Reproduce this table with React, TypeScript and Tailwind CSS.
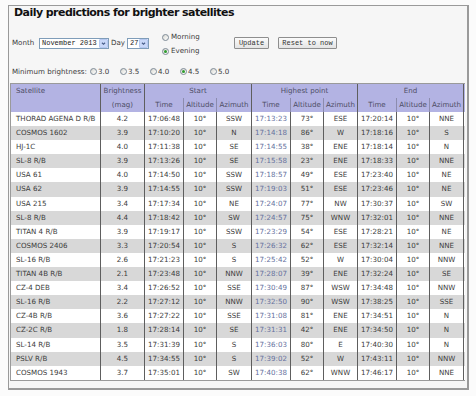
const rows: string[][] = [
  ["THORAD AGENA D R/B", "4.2", "17:06:48", "10°", "SSW", "17:13:23", "73°", "ESE", "17:20:14", "10°", "NNE"],
  ["COSMOS 1602", "3.9", "17:10:20", "10°", "N", "17:14:18", "86°", "W", "17:18:16", "10°", "S"],
  ["HJ-1C", "4.0", "17:11:38", "10°", "SE", "17:14:55", "38°", "ENE", "17:18:14", "10°", "N"],
  ["SL-8 R/B", "3.9", "17:13:26", "10°", "SE", "17:15:58", "23°", "ENE", "17:18:33", "10°", "NNE"],
  ["USA 61", "4.0", "17:14:50", "10°", "SSW", "17:18:57", "49°", "ESE", "17:23:40", "10°", "NE"],
  ["USA 62", "3.9", "17:14:55", "10°", "SSW", "17:19:03", "51°", "ESE", "17:23:46", "10°", "NE"],
  ["USA 215", "3.4", "17:17:34", "10°", "NE", "17:24:07", "77°", "NW", "17:30:37", "10°", "SW"],
  ["SL-8 R/B", "4.4", "17:18:42", "10°", "SW", "17:24:57", "75°", "WNW", "17:32:01", "10°", "NNE"],
  ["TITAN 4 R/B", "3.9", "17:19:17", "10°", "SSW", "17:23:29", "54°", "ESE", "17:28:21", "10°", "NE"],
  ["COSMOS 2406", "3.3", "17:20:54", "10°", "S", "17:26:32", "62°", "ESE", "17:32:14", "10°", "NNE"],
  ["SL-16 R/B", "2.6", "17:21:23", "10°", "S", "17:25:42", "52°", "W", "17:30:04", "10°", "NNW"],
  ["TITAN 4B R/B", "2.1", "17:23:48", "10°", "NNW", "17:28:07", "39°", "ENE", "17:32:24", "10°", "SE"],
  ["CZ-4 DEB", "3.4", "17:26:52", "10°", "SSE", "17:30:49", "87°", "WSW", "17:34:48", "10°", "NNW"],
  ["SL-16 R/B", "2.2", "17:27:12", "10°", "NNW", "17:32:50", "90°", "WSW", "17:38:25", "10°", "SSE"],
  ["CZ-4B R/B", "3.6", "17:27:22", "10°", "SSE", "17:31:08", "81°", "ENE", "17:34:51", "10°", "N"],
  ["CZ-2C R/B", "1.8", "17:28:14", "10°", "SE", "17:31:31", "42°", "ENE", "17:34:50", "10°", "N"],
  ["SL-14 R/B", "3.5", "17:31:39", "10°", "S", "17:36:03", "80°", "E", "17:40:30", "10°", "N"],
  ["PSLV R/B", "4.5", "17:34:55", "10°", "S", "17:39:02", "52°", "W", "17:43:11", "10°", "NNW"],
  ["COSMOS 1943", "3.7", "17:35:01", "10°", "SW", "17:40:38", "62°", "WNW", "17:46:17", "10°", "NNE"],
];

function Radio({ checked }: { checked?: boolean }) {
  return (
    <span className="flex h-[7px] w-[7px] shrink-0 items-center justify-center rounded-full border border-[#7d8a96] bg-gradient-to-br from-[#d8d8d2] to-white">
      {checked ? <span className="h-[3px] w-[3px] rounded-full bg-[#2e9c2e]" /> : null}
    </span>
  );
}

function Select({ value, className }: { value: string; className: string }) {
  return (
    <div className={"flex h-[11px] items-stretch border border-[#7f9db9] bg-white " + className}>
      <span className="flex-1 pl-[2px] font-['Liberation_Mono',monospace] text-[7px] leading-[9px] text-[#222]">
        {value}
      </span>
      <span className="flex w-[9px] items-center justify-center rounded-[1px] border border-[#b5c8f0] bg-[#c9d8f8]">
        <svg viewBox="0 0 8 8" className="h-[5px] w-[5px]">
          <path d="M1.5 2.8 L4 5.3 L6.5 2.8" stroke="#4a5f8a" strokeWidth="1.7" fill="none" />
        </svg>
      </span>
    </div>
  );
}

function Button({ label, className }: { label: string; className: string }) {
  return (
    <div
      className={
        "mt-[7px] flex h-[12px] items-center justify-center rounded-[1px] border border-[#8e8e8e] bg-gradient-to-b from-[#fbfbfb] to-[#e4e4e4] font-['Liberation_Mono',monospace] text-[7px] text-[#333] " +
        className
      }
    >
      {label}
    </div>
  );
}

const dataCell = "border-r border-[#5e5e5e] text-center";

export default function App() {
  return (
    <div className="h-[396px] w-[476px] overflow-hidden bg-[#fbfbfb] pt-[5px] font-['DejaVu_Sans',Verdana,sans-serif] text-[7.1px] text-[#3c3c3c]">
      <div className="ml-[8px] h-[385px] w-[461px] border border-r-2 border-b-2 border-[#9a9a9a] bg-[#f6f6f6]">
        <div className="h-[14px] pl-[5px] text-[11px] font-bold leading-[14px] tracking-[-0.55px] text-[#111]">
          Daily predictions for brighter satellites
        </div>

        <div className="mt-[10px] flex h-[28px] items-start pl-[3px]">
          <span className="mt-[6px] w-[27px] leading-[14px]">Month</span>
          <Select value="November 2013" className="mt-[8px] w-[70px]" />
          <span className="mt-[6px] w-[18px] pl-[2px] leading-[14px]">Day</span>
          <Select value="27" className="mt-[8px] w-[22px]" />
          <div className="ml-[13px] flex w-[72px] flex-col">
            <div className="flex h-[14px] items-center gap-[2px]">
              <Radio />
              <span>Morning</span>
            </div>
            <div className="flex h-[14px] items-center gap-[2px]">
              <Radio checked />
              <span>Evening</span>
            </div>
          </div>
          <Button label="Update" className="w-[35px]" />
          <Button label="Reset to now" className="ml-[9px] w-[59px]" />
        </div>

        <div className="mt-[7px] flex h-[14px] items-center pl-[3px]">
          <span className="w-[78px]">Minimum brightness:</span>
          {["3.0", "3.5", "4.0", "4.5", "5.0"].map((v) => (
            <span key={v} className="flex w-[30px] items-center gap-[1px]">
              <Radio checked={v === "4.5"} />
              <span>{v}</span>
            </span>
          ))}
        </div>

        <div className="mt-[4px] ml-[1px] w-[455px] border-t border-l border-b border-[#9a9a9a]">
          <div className="grid grid-cols-[90px_44px_39px_33px_35px_39px_33px_34px_39px_33px_34px] grid-rows-[14px_14px] bg-[#b3b3e3] text-[#4e4e66]">
            <div className="row-span-2 border-r border-[#5e5e5e] pl-[5px] leading-[14px]">Satellite</div>
            <div className="row-span-2 border-r border-[#5e5e5e] text-center leading-[14px]">
              Brightness
              <br />
              (mag)
            </div>
            <div className="col-span-3 border-r border-[#5e5e5e] text-center leading-[14px]">Start</div>
            <div className="col-span-3 border-r border-[#5e5e5e] text-center leading-[14px]">Highest point</div>
            <div className="col-span-3 border-r border-[#5e5e5e] text-center leading-[14px]">End</div>
            {[0, 1, 2].map((g) => [
              <div key={g + "t"} className="border-r border-[#8c8cae] text-center leading-[14px]">Time</div>,
              <div key={g + "a"} className="border-r border-[#8c8cae] text-center leading-[14px]">Altitude</div>,
              <div key={g + "z"} className="border-r border-[#5e5e5e] text-center leading-[14px]">Azimuth</div>,
            ])}
          </div>

          {rows.map((r, i) => (
            <div
              key={i}
              className={
                "grid h-[14.1px] grid-cols-[90px_44px_39px_33px_35px_39px_33px_34px_39px_33px_34px] leading-[14.1px] " +
                (i % 2 === 0 ? "bg-white" : "bg-[#d8d8d8]")
              }
            >
              <div className="border-r border-[#5e5e5e] pl-[5px] whitespace-nowrap">{r[0]}</div>
              {r.slice(1).map((c, j) => (
                <div key={j} className={j === 4 ? dataCell + " text-[#66719e]" : dataCell}>
                  {c}
                </div>
              ))}
            </div>
          ))}
        </div>
      </div>
    </div>
  );
}
